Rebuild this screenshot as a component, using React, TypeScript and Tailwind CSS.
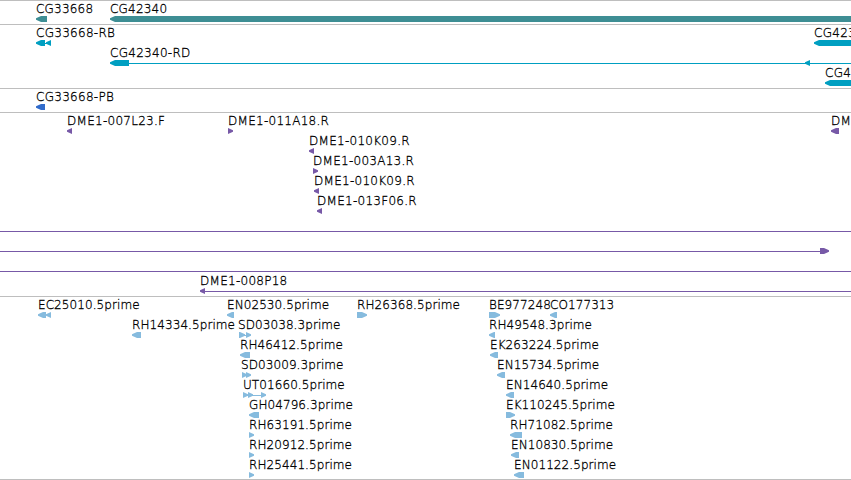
import clsx from 'clsx';

type Direction = 'left' | 'right';

interface Block {
  start: number;
  end: number;
  dir: Direction;
}

interface Feature {
  label?: string;
  labelX?: number;
  blocks?: Block[];
  // thin connector drawn behind the blocks
  line?: [number, number];
}

interface Track {
  name: string;
  fill: string;
  className: string;
  rows: Feature[][];
}

const VIEW_WIDTH = 851;

const left = (start: number, end: number): Block => ({ start, end, dir: 'left' });
const right = (start: number, end: number): Block => ({ start, end, dir: 'right' });

const tracks: Track[] = [
  {
    name: 'genes',
    fill: 'fill-[#3e8e94]',
    className: 'h-6 tracking-[0.2px]',
    rows: [
      [
        { label: 'CG33668', labelX: 36, blocks: [left(36, 47)] },
        { label: 'CG42340', labelX: 110, blocks: [left(110, 860)] },
      ],
    ],
  },
  {
    name: 'transcripts',
    fill: 'fill-[#009fc1]',
    className: 'h-16 tracking-[0.28px]',
    rows: [
      [
        { label: 'CG33668-RB', labelX: 36, blocks: [left(36, 45), left(46, 51)], line: [44, 50] },
        { label: 'CG423', labelX: 814, blocks: [left(814, 860)] },
      ],
      [{ label: 'CG42340-RD', labelX: 110, blocks: [left(110, 129), left(805, 810)], line: [129, 851] }],
      [{ label: 'CG4', labelX: 825, blocks: [left(825, 860)] }],
    ],
  },
  {
    name: 'proteins',
    fill: 'fill-[#316bcb]',
    className: 'h-6 tracking-[0.28px]',
    rows: [[{ label: 'CG33668-PB', labelX: 36, blocks: [left(36, 45)] }]],
  },
  {
    name: 'clones',
    fill: 'fill-[#7759a7]',
    className: 'h-46 tracking-[0.27px]',
    rows: [
      [
        { label: 'DME1-007L23.F', labelX: 67, blocks: [left(67, 72)] },
        { label: 'DME1-011A18.R', labelX: 228, blocks: [right(228, 233)] },
        { label: 'DM', labelX: 831, blocks: [left(831, 839)] },
      ],
      [{ label: 'DME1-010K09.R', labelX: 309, blocks: [left(309, 314)] }],
      [{ label: 'DME1-003A13.R', labelX: 313, blocks: [right(313, 318)] }],
      [{ label: 'DME1-010K09.R', labelX: 314, blocks: [left(314, 319)] }],
      [{ label: 'DME1-013F06.R', labelX: 317, blocks: [left(317, 322)] }],
      [{ line: [0, 851] }],
      [{ blocks: [right(820, 829)], line: [0, 821] }],
      [{ line: [0, 851] }],
      [{ label: 'DME1-008P18', labelX: 200, blocks: [left(200, 205)], line: [204, 851] }],
    ],
  },
  {
    name: 'ests',
    fill: 'fill-[#86bbde]',
    className: 'h-[183px] tracking-[0.08px]',
    rows: [
      [
        { label: 'EC25010.5prime', labelX: 38, blocks: [left(38, 46), left(46, 51)] },
        { label: 'EN02530.5prime', labelX: 227, blocks: [left(227, 234)] },
        { label: 'RH26368.5prime', labelX: 357, blocks: [right(357, 367)] },
        { label: 'BE977248', labelX: 489, blocks: [right(489, 500)] },
        { label: 'CO177313', labelX: 550, blocks: [left(550, 557)] },
      ],
      [
        { label: 'RH14334.5prime', labelX: 132, blocks: [left(132, 141)] },
        { label: 'SD03038.3prime', labelX: 238, blocks: [right(239, 245), right(246, 251)], line: [242, 248] },
        { label: 'RH49548.3prime', labelX: 489, blocks: [left(489, 495)] },
      ],
      [
        { label: 'RH46412.5prime', labelX: 240, blocks: [left(240, 250)] },
        { label: 'EK263224.5prime', labelX: 490, blocks: [left(490, 498)] },
      ],
      [
        { label: 'SD03009.3prime', labelX: 241, blocks: [right(242, 247), right(246, 251)] },
        { label: 'EN15734.5prime', labelX: 497, blocks: [left(497, 505)] },
      ],
      [
        { label: 'UT01660.5prime', labelX: 243, blocks: [right(243, 248), right(248, 253), right(261, 266)], line: [247, 262] },
        { label: 'EN14640.5prime', labelX: 506, blocks: [left(506, 514)] },
      ],
      [
        { label: 'GH04796.3prime', labelX: 249, blocks: [left(249, 259)] },
        { label: 'EK110245.5prime', labelX: 506, blocks: [right(506, 515)] },
      ],
      [
        { label: 'RH63191.5prime', labelX: 249, blocks: [right(249, 254)] },
        { label: 'RH71082.5prime', labelX: 510, blocks: [left(510, 522)] },
      ],
      [
        { label: 'RH20912.5prime', labelX: 249, blocks: [right(249, 254)] },
        { label: 'EN10830.5prime', labelX: 511, blocks: [left(511, 519)] },
      ],
      [
        { label: 'RH25441.5prime', labelX: 249, blocks: [right(249, 254)] },
        { label: 'EN01122.5prime', labelX: 514, blocks: [left(514, 524)] },
      ],
    ],
  },
];

// Outline of a block, with its head pointing along the strand
function blockPoints({ start, end, dir }: Block) {
  const head = Math.min(5, end - start);
  if (dir === 'left') {
    return `${start},2.2 ${start + head},0 ${end},0 ${end},6 ${start + head},6 ${start},3.8`;
  }
  return `${end},2.2 ${end - head},0 ${start},0 ${start},6 ${end - head},6 ${end},3.8`;
}

function TrackRow({ features, fill }: { features: Feature[]; fill: string }) {
  return (
    <div className="relative flex h-5 shrink-0 flex-col">
      <div className="h-[15px] shrink-0">
        {features.map((feature) =>
          feature.label ? (
            <span
              key={feature.label}
              className="absolute top-0 leading-4 whitespace-pre"
              style={{ left: feature.labelX }}
            >
              {feature.label}
            </span>
          ) : null
        )}
      </div>
      <svg width={VIEW_WIDTH} height={6} className={clsx('relative block shrink-0', fill)}>
        {features.map((feature, i) => (
          <g key={i}>
            {feature.line && (
              <rect x={feature.line[0]} y={3} width={feature.line[1] - feature.line[0]} height={1} />
            )}
            {feature.blocks?.map((block) => (
              <polygon key={block.start} points={blockPoints(block)} />
            ))}
          </g>
        ))}
      </svg>
    </div>
  );
}

export default function App() {
  return (
    <div className="flex h-[480px] w-[851px] flex-col overflow-hidden border-b border-[#bebebe] bg-white font-['DejaVu_Sans',sans-serif] text-[12px] font-extralight text-black [-webkit-text-stroke:0.3px_black]">
      {tracks.map((track) => (
        <div
          key={track.name}
          className={clsx('flex shrink-0 flex-col border-t border-[#bebebe]', track.className)}
        >
          {track.rows.map((row, i) => (
            <TrackRow key={i} features={row} fill={track.fill} />
          ))}
        </div>
      ))}
    </div>
  );
}
